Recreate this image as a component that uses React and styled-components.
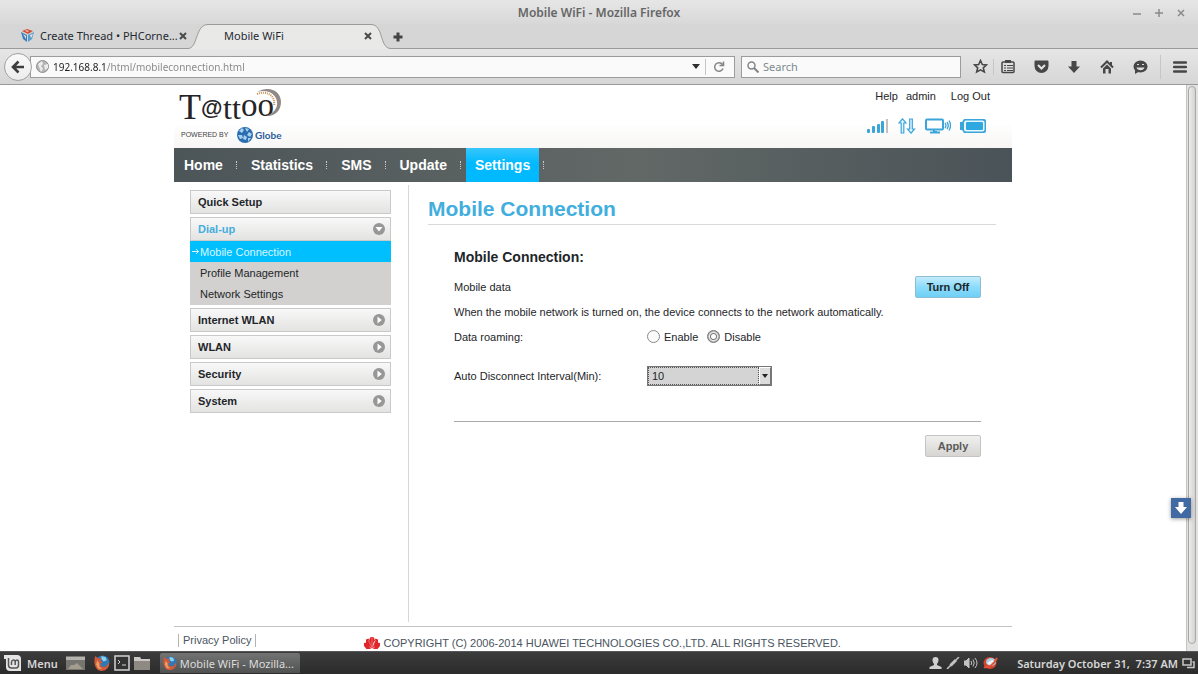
import React from "react";
import styled, { createGlobalStyle, css } from "styled-components";

const GlobalStyle = createGlobalStyle`
  * { box-sizing: border-box; }
  body { margin: 0; background: #fff; }
  button, input, select { font-family: inherit; }
`;

const uiFont = `"Noto Sans", "Open Sans", sans-serif`;
const pageFont = `"Liberation Sans", Arial, sans-serif`;

/* ---------- window ---------- */
const Desktop = styled.div`
  display: flex;
  flex-direction: column;
  min-height: 100vh;
  font-family: ${uiFont};
  font-size: 11px;
  color: #2e3436;
`;

const TitleBar = styled.header`
  display: grid;
  grid-template-columns: 1fr auto 1fr;
  align-items: center;
  height: 24px;
  padding: 2px 12px 0;
  background: linear-gradient(#e6e6e6, #d8d8d8);
`;

const WindowTitle = styled.div`
  grid-column: 2;
  font-size: 12px;
  line-height: 16px;
  font-weight: 600;
  color: #666;
`;

const WindowButtons = styled.div`
  display: flex;
  justify-content: flex-end;
  gap: 12px;
`;

const IconButton = styled.button`
  display: flex;
  align-items: center;
  justify-content: center;
  flex: none;
  width: ${(p) => p.$size || 10}px;
  height: ${(p) => p.$size || 10}px;
  padding: 0;
  border: 0;
  background: none;
  color: ${(p) => p.$color || "#4a4a4a"};
`;

const TabStrip = styled.div`
  display: flex;
  height: 25px;
  background: #d6d6d6;
  border-bottom: 1px solid #9a9a9a;
`;

const Tab = styled.div`
  position: relative;
  display: flex;
  align-items: center;
  flex: none;
  height: 25px;
  gap: 6px;
  width: ${(p) => (p.$active ? 205 : 188)}px;
  padding: ${(p) => (p.$active ? "0 20px 2px 36px" : "0 0 2px 21px")};
  z-index: ${(p) => (p.$active ? 1 : 0)};
`;

const TabShape = styled.svg`
  position: absolute;
  inset: 0;
  z-index: -1;
`;

const TabTitle = styled.span`
  flex: 1;
  min-width: 0;
  white-space: nowrap;
  color: #1f2a30;
`;

const NewTab = styled(IconButton)`
  height: 25px;
`;

const Toolbar = styled.div`
  display: flex;
  align-items: center;
  height: 36px;
  padding: 0 11px 0 4px;
  background: linear-gradient(#e6e6e6, #d6d6d6);
  border-bottom: 1px solid #9a9a9a;
`;

const BackButton = styled.button`
  display: flex;
  align-items: center;
  justify-content: center;
  flex: none;
  width: 28px;
  height: 28px;
  padding: 0;
  z-index: 1;
  border: 1px solid #a0a0a0;
  border-radius: 50%;
  background: linear-gradient(#fafafa, #ececec);
`;

const FieldBox = styled.div`
  display: flex;
  align-items: center;
  height: 22px;
  border: 1px solid #9c9c9c;
  background: #fafafa;
`;

const AddressBox = styled(FieldBox)`
  flex: 1;
  margin-left: -2px;
  padding: 0 6px 0 5px;
  gap: 4px;
`;

const AddressInput = styled.input`
  flex: 1;
  min-width: 0;
  height: 20px;
  padding: 0;
  border: 0;
  outline: 0;
  font-size: 10px;
  color: transparent;
  background: linear-gradient(90deg, #1c1c1c 54px, #858585 54px);
  background-clip: text;
  -webkit-background-clip: text;
`;

const SearchBox = styled(FieldBox)`
  width: 220px;
  margin: 0 11px 0 6px;
  padding: 0 5px;
  gap: 4px;
`;

const SearchInput = styled.input`
  flex: 1;
  min-width: 0;
  padding: 0;
  border: 0;
  outline: 0;
  background: none;
  font-size: 11px;
  color: #333;
  &::placeholder { color: #7a8a8e; opacity: 1; }
`;

const Rule = styled.span`
  width: 1px;
  height: ${(p) => p.$height}px;
  background: #c6c6c6;
`;

const ToolGroup = styled.div`
  display: flex;
  align-items: center;
  gap: ${(p) => p.$gap}px;
  margin-right: ${(p) => p.$after || 0}px;
`;

/* ---------- web page ---------- */
const Viewport = styled.div`
  display: flex;
  flex: 1;
  background: #fff;
`;

const PageScroll = styled.div`
  display: flex;
  flex: 1;
  min-width: 0;
  justify-content: center;
  font-family: ${pageFont};
  color: #1e2629;
`;

const ScrollTrack = styled.div`
  display: flex;
  width: 12px;
  padding: 1px 2px 7px 1px;
  border-left: 1px solid #c4c4c0;
  background: #e2e2e0;
`;

const ScrollThumb = styled.div`
  flex: 1;
  border: 1px solid #a8a8a8;
  border-radius: 4px;
  background: linear-gradient(90deg, #ededed, #d2d2d2);
`;

const Page = styled.div`
  display: flex;
  flex-direction: column;
  width: 100%;
  max-width: 838px;
`;

const Banner = styled.div`
  display: flex;
  justify-content: space-between;
  height: 63px;
  padding: 0 22px 0 5px;
  background: linear-gradient(#fff 60%, #f7f6f5);
`;

const Account = styled.div`
  display: flex;
  flex-direction: column;
  align-items: flex-end;
  padding-top: 3px;
`;

const LinkRow = styled.div`
  display: flex;
  gap: 8px;
  line-height: 16px;
`;

const PlainLink = styled.a`
  color: #1e2629;
  text-decoration: none;
  margin-left: ${(p) => (p.$apart ? 7 : 0)}px;
`;

const StatusRow = styled.div`
  display: flex;
  align-items: center;
  gap: 9px;
  margin: 14px 4px 0 0;
`;

const MainNav = styled.nav`
  display: flex;
  align-items: center;
  height: 34px;
  padding-left: 1px;
  background: linear-gradient(90deg, #4c5558, #626866 55%, #4a5358);
`;

const NavItem = styled.a`
  padding: 0 9px;
  line-height: 34px;
  font-size: 14px;
  font-weight: 700;
  color: #fff;
  text-decoration: none;
  ${(p) =>
    p.$active &&
    css`
      background: linear-gradient(#38c6fb, #00b9ff 45%);
    `}
`;

const NavDots = styled.span`
  height: 8px;
  margin: 0 5px 0 4px;
  border-left: 1px dotted #c8cccd;
`;

const Columns = styled.div`
  display: flex;
  flex: 1;
  padding: 3px 0 4px;
`;

const Sidebar = styled.aside`
  width: 235px;
  padding: 5px 17px 0 16px;
  border-right: 1px solid #d6d6d6;
`;

const SideItem = styled.a`
  display: flex;
  align-items: center;
  justify-content: space-between;
  height: 24px;
  margin-bottom: ${(p) => (p.$open ? 0 : 3)}px;
  padding: 0 5px 0 7px;
  border: 1px solid #c9c9c9;
  background: linear-gradient(#f8f8f8, #e3e3e2);
  font-weight: 700;
  color: ${(p) => (p.$open ? "#45aedd" : "#1e2629")};
  text-decoration: none;
`;

const SubMenu = styled.div`
  margin-bottom: 3px;
  padding-bottom: 1px;
  background: #d2d1cf;
`;

const SubItem = styled.a`
  display: flex;
  align-items: center;
  height: 21px;
  padding-left: ${(p) => (p.$active ? 2 : 10)}px;
  color: ${(p) => (p.$active ? "#d8f5ff" : "#1e2629")};
  background: ${(p) => (p.$active ? "#00bfff" : "none")};
  text-decoration: none;
`;

const Content = styled.main`
  flex: 1;
  padding: 10px 16px 0 19px;
`;

const PageHeading = styled.h1`
  margin: 0;
  padding-bottom: 1px;
  border-bottom: 1px solid #d9d9d9;
  line-height: 28px;
  font-size: 21px;
  color: #42aede;
`;

const Panel = styled.form`
  padding: 21px 15px 0 26px;
`;

const PanelHeading = styled.h2`
  margin: 0 0 6px;
  line-height: 22px;
  font-size: 14px;
`;

const Row = styled.div`
  display: flex;
  align-items: center;
  justify-content: ${(p) => (p.$spread ? "space-between" : "flex-start")};
  min-height: ${(p) => p.$height || 25}px;
`;

const RowLabel = styled.label`
  width: 193px;
`;

const Choice = styled.label`
  display: flex;
  align-items: center;
  gap: 4px;
  margin-right: 9px;
`;

const Radio = styled.input`
  appearance: none;
  width: 13px;
  height: 13px;
  margin: 0;
  border: 1px solid #8a8a8a;
  border-radius: 50%;
  background: #fafafa;
  &:checked {
    border-color: #777;
    background: radial-gradient(circle, #fff 0 2px, #777 3px, #eee 4px, #8a8a8a 6px);
  }
`;

const SelectBox = styled.div`
  display: flex;
  position: relative;
  width: 125px;
  height: 20px;
  border: 1px solid #777;
  background: #d4d4d4;
`;

const Select = styled.select`
  appearance: none;
  flex: 1;
  padding: 0 3px;
  border: 1px dotted #555;
  border-radius: 0;
  outline: 0;
  margin-right: 12px;
  background: #d4d4d4;
  font-size: 11px;
  color: #1e2629;
`;

const SelectArrow = styled.span`
  position: absolute;
  right: 0;
  top: 0;
  bottom: 0;
  display: flex;
  align-items: center;
  justify-content: center;
  width: 12px;
  border: 1px solid;
  border-color: #fff #777 #777 #fff;
  background: #dcdcdc;
  pointer-events: none;
`;

const PanelButton = styled.button`
  height: 22px;
  width: ${(p) => (p.$primary ? 66 : 56)}px;
  padding: 0;
  border: 1px solid ${(p) => (p.$primary ? "#8fbdd2" : "#c4c4c4")};
  border-radius: 2px;
  background: ${(p) =>
    p.$primary
      ? "linear-gradient(#c3ecfc, #8cdcfb 50%, #6fcff5)"
      : "linear-gradient(#f0f0ef, #d6d5d2)"};
  font-size: 11px;
  font-weight: 700;
  color: ${(p) => (p.$primary ? "#1e2629" : "#5a5a5a")};
`;

const Actions = styled.div`
  display: flex;
  justify-content: flex-end;
  margin-top: 19px;
  padding-top: 13px;
  border-top: 1px solid #a8a8a8;
`;

const Footer = styled.footer`
  display: flex;
  align-items: center;
  height: 25px;
  border-top: 1px solid #c2c2be;
  color: #4a5560;
`;

const PolicyLink = styled.a`
  margin: 2px 108px 0 4px;
  padding: 0 4px;
  border: solid #b4b4b4;
  border-width: 0 1px;
  line-height: 13px;
  color: #4a5560;
  text-decoration: none;
`;

const Copyright = styled.div`
  display: flex;
  align-items: center;
  gap: 3px;
  margin-top: 8px;
  line-height: 14px;
`;

const FloatButton = styled.button`
  position: fixed;
  right: 7px;
  bottom: 156px;
  display: flex;
  align-items: center;
  justify-content: center;
  width: 20px;
  height: 20px;
  padding: 0;
  border: 0;
  background: #416aa3;
  box-shadow: 0 1px 4px rgba(0, 0, 0, 0.4);
`;

/* ---------- taskbar ---------- */
const Taskbar = styled.footer`
  display: flex;
  align-items: center;
  height: 23px;
  padding: 0 3px 0 4px;
  background: linear-gradient(#3c3c3c, #2b2b2b);
  border-top: 1px solid #55575a;
  color: #d6d6d6;
`;

const MenuButton = styled.button`
  display: flex;
  align-items: center;
  gap: 6px;
  padding: 0;
  border: 0;
  background: none;
  font-size: 11px;
  font-weight: 600;
  color: #d6d6d6;
`;

const Launchers = styled.div`
  display: flex;
  align-items: center;
  gap: 3px;
  margin: 0 9px 0 8px;
`;

const TaskButton = styled.button`
  display: flex;
  align-items: center;
  gap: 3px;
  width: 140px;
  height: 20px;
  padding: 0 3px;
  border: 0;
  border-radius: 2px 2px 0 0;
  background: linear-gradient(#737373, #505252);
  font-size: 11px;
  white-space: nowrap;
  color: #dcdcdc;
`;

const Tray = styled.div`
  display: flex;
  align-items: center;
  gap: 4px;
  margin-left: auto;
`;

const Clock = styled.time`
  margin-left: 14px;
  font-weight: 600;
  white-space: pre;
`;

/* ---------- drawings ---------- */
const CrossIcon = ({ size = 8, width = 2 }) => (
  <svg width={size} height={size} viewBox="0 0 8 8" stroke="currentColor" strokeWidth={width}>
    <path d="M1 1L7 7M7 1L1 7" />
  </svg>
);

const GlobeFox = ({ size = 15 }) => (
  <svg width={size} height={size} viewBox="0 0 15 15">
    <circle cx="8" cy="7" r="6.5" fill="#2e78b5" />
    <path d="M7 1l4 1 1 3-3 1-2-2z" fill="#8cd0ee" />
    <path d="M1 1l3 2 3 0-1 2 2 2-2 1 1 3 4 0 3-4c1 5-3 8-7 8C2 15-1 9 1 1z" fill="#d0593a" />
    <path d="M3 5l2 3 0 3 3 2-4 0-2-4z" fill="#eda065" />
  </svg>
);

const CubeIcon = () => (
  <svg width="13" height="13" viewBox="0 0 13 13">
    <path d="M0 3l6 3v7L2 10z" fill="#3b7fb8" />
    <path d="M13 3L7 6v7l4-3z" fill="#5c9bc8" />
    <path d="M1 2l5-2 6 2-5 3z" fill="#d2513a" />
    <path d="M2 5l3 2v3zM9 6l3-1-2 4z" fill="#e6e9ec" />
    <path d="M4 1l4 1-2 1z" fill="#f6e2dc" />
  </svg>
);

const TattooLogo = () => (
  <svg width="106" height="61" viewBox="0 -3 106 61" fontFamily="Liberation Serif, serif" fill="#242426">
    <text x="0" y="31" fontSize="36">T</text>
    <text x="22" y="27" fontSize="22" fontWeight="700" fontFamily="Liberation Sans, sans-serif">@</text>
    <text x="44" y="31" fontSize="32">tt</text>
    <text x="62" y="28" fontSize="33">oo</text>
    <path d="M78 4C90-3 102 3 102 14c0 9-7 15-15 14 7-2 12-8 11-14C97 6 89 1 78 4z" fill="#918986" />
    <path d="M78 6c10-4 19 2 17 12" fill="none" stroke="#c98f4e" strokeWidth="2" strokeDasharray="1 1" />
    <text x="2" y="49" fontSize="7" fontFamily="Liberation Sans, sans-serif" fill="#444">POWERED BY</text>
    <circle cx="66" cy="47" r="8" fill="#2c6db0" />
    <path d="M60 43l3-3 2 2-2 3zM66 40l4 1-2 3zM70 44l3 2-2 3-3-2zM59 47l4 0 1 3-3 1zM65 47l3 2-1 3-3-1zM69 50l3 0-3 4z" fill="#a6d2ee" />
    <text x="76" y="51" fontSize="10" fontWeight="700" fontFamily="Lato, sans-serif" fill="#2b5c9c">Globe</text>
  </svg>
);

const SideArrow = ({ down }) => (
  <svg width="12" height="12" viewBox="0 0 12 12">
    <circle cx="6" cy="6" r="6" fill="#979797" />
    <path d={down ? "M2.500 4h7L6 8.500z" : "M4.500 2.500v7L8.800 6z"} fill="#fff" />
  </svg>
);

const SignalIcon = () => (
  <svg width="22" height="16" viewBox="0 0 22 16" fill="#3ba5d9">
    <rect x="0" y="11" width="3" height="4" rx="1" />
    <rect x="5" y="8" width="3" height="7" rx="1" />
    <rect x="10" y="6" width="3" height="9" rx="1" />
    <rect x="14" y="3" width="3" height="12" rx="1" />
    <rect x="19" y="1" width="2" height="14" fill="#c4c0be" />
  </svg>
);

const TransferIcon = () => (
  <svg width="18" height="16" viewBox="0 0 18 16" fill="#e8f6fc" stroke="#3ba5d9" strokeWidth="1.200">
    <path d="M4.500.8L8 5H5.800v10H3.200V5H1z" />
    <path d="M13 15.200L9.500 11h2.200V1h2.600v10h2.200z" />
  </svg>
);

const MonitorIcon = () => (
  <svg width="26" height="16" viewBox="0 0 26 16" fill="none" stroke="#3ba5d9">
    <rect x="1" y="1.500" width="17" height="10" rx="1" strokeWidth="2" />
    <path d="M5 14.500h10M9 12v2h3" strokeWidth="2" />
    <path d="M20 5q2 2.500 0 5M22 4q2.500 3.500 0 7M24 2.500q3 5 0 10" strokeWidth="1.300" />
  </svg>
);

const BatteryIcon = () => (
  <svg width="26" height="16" viewBox="0 0 26 16">
    <path d="M4 1h20a2 2 0 0 1 2 2v10a2 2 0 0 1-2 2H4l-2-3H0V4h2z" fill="#3ba5d9" />
    <rect x="4" y="2.500" width="20.500" height="11" rx="2" fill="#e8f7fd" />
    <rect x="6" y="4" width="17" height="8" rx="1" fill="#2fa7df" />
  </svg>
);

const HuaweiIcon = () => (
  <svg width="16" height="12" viewBox="0 0 16 12" fill="#e0262b">
    <path d="M8 11.500L5 4 6 0.500 8 0l2 .5L11 4zM7.500 11.500L2 6.500 2 2.500 4.500 1.500 7 7zM8.500 11.500L14 6.500V2.500L11.500 1.500 9 7zM7 12H2.500L0 9V6l2-.5zM9 12h4.500L16 9V6l-2-.5z" />
    <path d="M8 1v9M4.500 3l3 7M11.500 3l-3 7" stroke="#f7b5b5" strokeWidth=".5" />
  </svg>
);

const toolIcons = {
  Library: (
    <svg width="14" height="15" viewBox="0 0 14 15" fill="none" stroke="#474747">
      <rect x="1" y="3" width="12" height="10.500" rx="1" strokeWidth="1.500" />
      <path d="M4 2.500h6" strokeWidth="3" />
      <path d="M3 6.500h2M6 6.500h6M3 9h2M6 9h6M3 11.500h2M6 11.500h6" />
    </svg>
  ),
  Pocket: (
    <svg width="15" height="14" viewBox="0 0 15 14">
      <path d="M1.500 0.500h12q1 0 1 1v4.500a7 7 0 0 1-14 0V1.500q0-1 1-1z" fill="#474747" />
      <path d="M4 5l3.500 3.500L11 5" fill="none" stroke="#e4e4e4" strokeWidth="2" />
    </svg>
  ),
  Downloads: (
    <svg width="14" height="14" viewBox="0 0 14 14" fill="#474747">
      <path d="M4.500 1h5v5.500H13L7 13 1 6.500h3.500z" />
    </svg>
  ),
  Home: (
    <svg width="14" height="14" viewBox="0 0 14 14">
      <path d="M1 7.500L7 1.500l6 6M11 2v3" fill="none" stroke="#474747" strokeWidth="2" />
      <path d="M3 8.500l4-4 4 4v5H8.500V9h-3v4.500H3z" fill="#474747" />
    </svg>
  ),
  Chat: (
    <svg width="15" height="14" viewBox="0 0 15 14">
      <ellipse cx="7.500" cy="6.500" rx="7" ry="6" fill="#474747" />
      <path d="M2 9v5l5-3z" fill="#474747" />
      <path d="M3.500 7.500h8c-1 3.500-7 3.500-8 0z" fill="#ddd" />
      <path d="M4 4.500h2M9 4.500h2" stroke="#ddd" />
    </svg>
  ),
};

const sideSections = ["Internet WLAN", "WLAN", "Security", "System"];

export default function App() {
  return (
    <Desktop>
      <GlobalStyle />
      <TitleBar>
        <WindowTitle>Mobile WiFi - Mozilla Firefox</WindowTitle>
        <WindowButtons>
          <IconButton aria-label="Minimize" $color="#8a8a8a">
            <svg width="8" height="8" viewBox="0 0 8 8"><path d="M0 5h8" stroke="currentColor" strokeWidth="1.500" /></svg>
          </IconButton>
          <IconButton aria-label="Maximize" $color="#8a8a8a">
            <svg width="8" height="8" viewBox="0 0 8 8"><path d="M0 4h8M4 0v8" stroke="currentColor" strokeWidth="1.500" /></svg>
          </IconButton>
          <IconButton aria-label="Close" $color="#8a8a8a"><CrossIcon width={1.5} /></IconButton>
        </WindowButtons>
      </TitleBar>

      <TabStrip>
        <Tab>
          <CubeIcon />
          <TabTitle>Create Thread • PHCorne...</TabTitle>
          <IconButton aria-label="Close tab"><CrossIcon /></IconButton>
        </Tab>
        <Tab $active>
          <TabShape width="205" height="25" viewBox="0 0 205 25">
            <path d="M0 25V24.500C10 24.500 7 .5 20 .5H183C196 .5 191 24.500 203 24.500V25z" fill="#e9e9e8" />
            <path d="M0 24.500C10 24.500 7 .5 20 .5H183C196 .5 191 24.500 203 24.500" fill="none" stroke="#9a9a9a" />
          </TabShape>
          <TabTitle>Mobile WiFi</TabTitle>
          <IconButton aria-label="Close tab"><CrossIcon /></IconButton>
        </Tab>
        <NewTab aria-label="New tab">
          <svg width="10" height="10" viewBox="0 0 10 10"><path d="M.5 5h9M5 .5v9" stroke="#444" strokeWidth="3" /></svg>
        </NewTab>
      </TabStrip>

      <Toolbar>
        <BackButton aria-label="Back">
          <svg width="14" height="14" viewBox="0 0 14 14" fill="none" stroke="#3d3d3d" strokeWidth="2.600">
            <path d="M2.500 7H13M7.500 1.500L2 7l5.500 5.500" />
          </svg>
        </BackButton>
        <AddressBox>
          <svg width="13" height="13" viewBox="0 0 13 13">
            <circle cx="6.500" cy="6.500" r="6" fill="#b4b4b4" stroke="#8f8f8f" />
            <path d="M2 4l4-3 1 3-2 2 2 3-2 3zM8 5l4-1 0 4-3 2z" fill="#ececec" />
          </svg>
          <AddressInput aria-label="Address" defaultValue="192.168.8.1/html/mobileconnection.html" />
          <IconButton aria-label="Show history" $color="#2f2f2f">
            <svg width="8" height="5" viewBox="0 0 8 5"><path d="M0 0h8L4 5z" fill="currentColor" /></svg>
          </IconButton>
          <Rule $height={16} />
          <IconButton aria-label="Reload" $size={18}>
            <svg width="12" height="12" viewBox="0 0 12 12" fill="none" stroke="#858585" strokeWidth="1.500">
              <path d="M9.500 3.500A4.300 4.300 0 1 0 10 7.500M10.500 .5V4.500H6.500" />
            </svg>
          </IconButton>
        </AddressBox>
        <SearchBox>
          <svg width="12" height="12" viewBox="0 0 12 12" fill="none" stroke="#858585">
            <circle cx="4.500" cy="4.500" r="3.500" strokeWidth="1.500" />
            <path d="M7 7l4.500 4.500" strokeWidth="2" />
          </svg>
          <SearchInput aria-label="Search" placeholder="Search" />
        </SearchBox>
        <ToolGroup $gap={5} $after={6}>
          <IconButton aria-label="Bookmark this page" $size={16}>
            <svg width="15" height="15" viewBox="0 0 15 15" fill="none" stroke="#474747" strokeWidth="1.600">
              <path d="M7.500 1.500l1.800 4 4.200.4-3.200 2.900 1 4.200-3.800-2.200L3.700 13l1-4.200L1.500 5.900l4.200-.4z" />
            </svg>
          </IconButton>
          <Rule $height={16} />
        </ToolGroup>
        <ToolGroup $gap={17} $after={12}>
          {Object.entries(toolIcons).map(([name, icon]) => (
            <IconButton key={name} aria-label={name} $size={16}>{icon}</IconButton>
          ))}
        </ToolGroup>
        <ToolGroup $gap={12}>
          <Rule $height={24} />
          <IconButton aria-label="Open menu" $size={14}>
            <svg width="14" height="12" viewBox="0 0 14 12" stroke="#474747" strokeWidth="2.500" strokeLinecap="round">
              <path d="M1 1.500h12M1 6h12M1 10.500h12" />
            </svg>
          </IconButton>
        </ToolGroup>
      </Toolbar>

      <Viewport>
        <PageScroll>
          <Page>
            <Banner>
              <TattooLogo />
              <Account>
                <LinkRow>
                  <PlainLink href="#help">Help</PlainLink>
                  <PlainLink href="#admin">admin</PlainLink>
                  <PlainLink href="#logout" $apart>Log Out</PlainLink>
                </LinkRow>
                <StatusRow>
                  <SignalIcon />
                  <TransferIcon />
                  <MonitorIcon />
                  <BatteryIcon />
                </StatusRow>
              </Account>
            </Banner>
            <MainNav>
              {["Home", "Statistics", "SMS", "Update", "Settings"].map((name) => (
                <React.Fragment key={name}>
                  <NavItem href={"#" + name} $active={name === "Settings"}>{name}</NavItem>
                  <NavDots />
                </React.Fragment>
              ))}
            </MainNav>
            <Columns>
              <Sidebar>
                <SideItem href="#quick">Quick Setup</SideItem>
                <SideItem href="#dialup" $open>Dial-up<SideArrow down /></SideItem>
                <SubMenu>
                  <SubItem href="#mobile" $active>
                    <svg width="8" height="7" viewBox="0 0 8 7" fill="none" stroke="currentColor">
                      <path d="M0 3.500h6.500M4 1l2.500 2.500L4 6" />
                    </svg>
                    Mobile Connection
                  </SubItem>
                  <SubItem href="#profile">Profile Management</SubItem>
                  <SubItem href="#network">Network Settings</SubItem>
                </SubMenu>
                {sideSections.map((name) => (
                  <SideItem key={name} href={"#" + name}>{name}<SideArrow /></SideItem>
                ))}
              </Sidebar>
              <Content>
                <PageHeading>Mobile Connection</PageHeading>
                <Panel onSubmit={(e) => e.preventDefault()}>
                  <PanelHeading>Mobile Connection:</PanelHeading>
                  <Row $spread>
                    <span>Mobile data</span>
                    <PanelButton type="button" $primary>Turn Off</PanelButton>
                  </Row>
                  <Row>When the mobile network is turned on, the device connects to the network automatically.</Row>
                  <Row role="radiogroup" aria-labelledby="roaming">
                    <RowLabel as="span" id="roaming">Data roaming:</RowLabel>
                    <Choice><Radio type="radio" name="roaming" />Enable</Choice>
                    <Choice><Radio type="radio" name="roaming" defaultChecked />Disable</Choice>
                  </Row>
                  <Row $height={53}>
                    <RowLabel htmlFor="interval">Auto Disconnect Interval(Min):</RowLabel>
                    <SelectBox>
                      <Select id="interval" defaultValue="10">
                        <option>5</option>
                        <option>10</option>
                        <option>20</option>
                      </Select>
                      <SelectArrow>
                        <svg width="6" height="4" viewBox="0 0 6 4"><path d="M0 0h6L3 4z" fill="#222" /></svg>
                      </SelectArrow>
                    </SelectBox>
                  </Row>
                  <Actions>
                    <PanelButton type="submit">Apply</PanelButton>
                  </Actions>
                </Panel>
              </Content>
            </Columns>
            <Footer>
              <PolicyLink href="#privacy">Privacy Policy</PolicyLink>
              <Copyright>
                <HuaweiIcon />
                COPYRIGHT (C) 2006-2014 HUAWEI TECHNOLOGIES CO.,LTD. ALL RIGHTS RESERVED.
              </Copyright>
            </Footer>
          </Page>
        </PageScroll>
        <ScrollTrack><ScrollThumb /></ScrollTrack>
      </Viewport>

      <FloatButton aria-label="Scroll to bottom">
        <svg width="14" height="14" viewBox="0 0 14 14" fill="#fff"><path d="M4.500 1h5v5H13l-6 7-6-7h3.500z" /></svg>
      </FloatButton>

      <Taskbar>
        <MenuButton>
          <svg width="17" height="16" viewBox="0 0 17 16">
            <path d="M0 0h13a4 4 0 0 1 4 4v12H6a4 4 0 0 1-4-4V4H0z" fill="#e4e4e4" />
            <path d="M4.500 3v7q0 3 3 3H12q2.500 0 2.500-3V7q0-2-1.500-2t-1.800 2v3M11.200 7q0-2-1.700-2T7.500 7v3" fill="none" stroke="#555" strokeWidth="1.500" />
          </svg>
          Menu
        </MenuButton>
        <Launchers>
          <IconButton aria-label="Show desktop" $size={19}>
            <svg width="19" height="15" viewBox="0 0 19 15">
              <path d="M0 0h19v14H0z" fill="#77756f" />
              <path d="M0 1h19v3H0z" fill="#b4b3b0" />
              <path d="M2 13l3-4h3l3-2 6 6z" fill="#a39c8f" />
            </svg>
          </IconButton>
          <span />
          <span />
          <IconButton aria-label="Firefox" $size={17}><GlobeFox size={16} /></IconButton>
          <IconButton aria-label="Terminal" $size={17}>
            <svg width="16" height="16" viewBox="0 0 16 16" fill="none" stroke="#d4d4d4">
              <rect x="1" y="1" width="14" height="14" fill="#333" strokeWidth="1.500" />
              <path d="M4 5l2 2-2 2M8 10h4" />
            </svg>
          </IconButton>
          <IconButton aria-label="Files" $size={17}>
            <svg width="16" height="14" viewBox="0 0 16 14">
              <path d="M0 1h6l1 2h9v11H0z" fill="#8e8a83" />
              <path d="M0 1h6l1 2h9v2H0z" fill="#cbc9c5" />
            </svg>
          </IconButton>
        </Launchers>
        <TaskButton>
          <GlobeFox size={14} />
          Mobile WiFi - Mozilla...
        </TaskButton>
        <Tray>
          <svg width="13" height="12" viewBox="0 0 13 12" fill="#d0d0d0">
            <path d="M3.500 3a3 3 0 0 1 6 0c0 2-1 3-1.500 4v1l4.500 2v2H.5v-2L5 8V7C4.500 6 3.500 5 3.500 3z" />
          </svg>
          <svg width="14" height="12" viewBox="0 0 14 12" fill="none" stroke="#c4c4c4">
            <path d="M1 12L5 8M10 3l3-3" strokeWidth="1.500" />
            <path d="M4.500 8.500L10 3" strokeWidth="3" />
          </svg>
          <svg width="14" height="12" viewBox="0 0 14 12" fill="none" stroke="#c4c4c4">
            <path d="M0 4h2l3-3v10L2 8H0z" fill="#c4c4c4" />
            <path d="M7 4q1.500 2 0 4M9 2.500q2.500 3.500 0 7M11 1q4 5 0 10" />
          </svg>
          <svg width="17" height="14" viewBox="0 0 17 14">
            <ellipse cx="8" cy="7" rx="6.500" ry="6" fill="#d8432f" />
            <ellipse cx="9" cy="6" rx="5" ry="4" fill="#a9cfe0" />
            <path d="M2 11c3 1 9-1 13-9" stroke="#e05338" strokeWidth="2" fill="none" />
            <path d="M5 7l5-3 2 1-4 4z" fill="#eef4f6" />
          </svg>
          <Clock>Saturday October 31,  7:37 AM</Clock>
          <svg width="13" height="11" viewBox="0 0 13 11" fill="none" stroke="#c8c8c8" strokeWidth="1.500">
            <rect x="1" y="1" width="8" height="6" />
            <path d="M5 9.500h7V4h-1.500" />
          </svg>
        </Tray>
      </Taskbar>
    </Desktop>
  );
}
